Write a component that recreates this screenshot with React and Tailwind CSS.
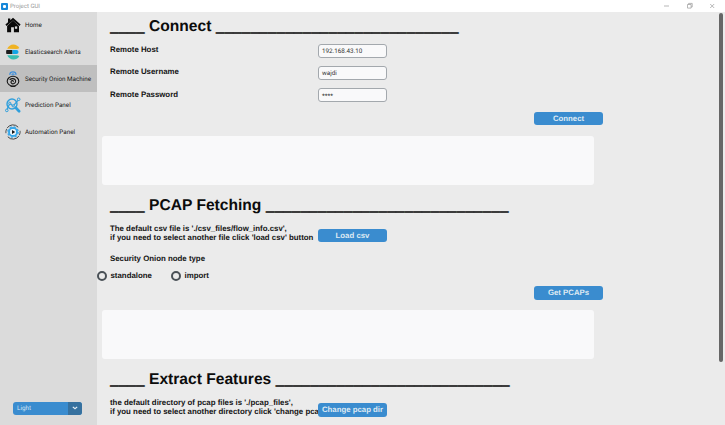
const SANS = "font-['Liberation_Sans',Arial,sans-serif] [text-rendering:geometricPrecision]";
const ROBOTO = "font-[Roboto,sans-serif] [text-rendering:geometricPrecision]";

function HomeIcon() {
  return (
    <svg viewBox="0 0 16 16" className="size-4 shrink-0">
      <path d="M8 .8 15.6 7.6 14.4 9 8 3.4 1.6 9 .4 7.6 3 5.3V1.6h2.3v1.6z" fill="#0a0a0a" />
      <path d="M8 3.6 14 9v6.3H8.9v-5H6.1v5H2.1V9z" fill="#0a0a0a" />
      <path d="M9.9 9.4h2.3v2.4H9.9z" fill="#dbdbdb" />
    </svg>
  );
}

function ElasticIcon() {
  return (
    <svg viewBox="0 0 16 16" className="size-4 shrink-0">
      <path d="M2.2 4.8C3.4 2.2 5.6.6 8.4.6c2.4 0 4.6 1.4 5.9 3.4-.7.6-1.7.9-2.8.9z" fill="#f0b323" />
      <path d="M1.4 6.1h6.1v4H1.4a6.6 6.6 0 0 1 0-4z" fill="#1d1d1d" />
      <path d="M7.5 6.1h4a2 2 0 0 1 0 4h-4z" fill="#12a5e6" />
      <path d="M2.2 11.3h9.3c1.1 0 2.1.3 2.8.9a7 7 0 0 1-5.9 3.3c-2.8 0-5-1.6-6.2-4.2z" fill="#3bbeb1" />
    </svg>
  );
}

function OnionIcon() {
  return (
    <svg viewBox="0 0 16 16" className="size-4 shrink-0" fill="none" strokeLinecap="round">
      <path d="M4.8 3.4C5 .2 10.8 0 11 3.4M7 4c0-1.4 2-1.4 2-.2" stroke="#3f8fdc" strokeWidth="1.2" />
      <ellipse cx="8" cy="10.2" rx="5.8" ry="4.9" stroke="#161616" strokeWidth="1.1" />
      <path
        d="M8.2 10.6c.5-1-1.3-1.6-2-.4-.8 1.5.7 2.9 2.3 2.6 2-.4 2.8-2.6 1.6-4.1C8.900 7.300 6.500 7.200 5 8.500"
        stroke="#161616"
        strokeWidth="1.1"
      />
      <path d="M6 15.500h4" stroke="#161616" strokeWidth=".9" />
    </svg>
  );
}

function PredictionIcon() {
  return (
    <svg viewBox="0 0 16 16" className="size-4 shrink-0" fill="none" stroke="#2f9fdc">
      <circle cx="7" cy="7" r="5" strokeWidth="1.4" />
      <path d="m10.8 10.8 3.3 3.4" strokeWidth="2.7" strokeLinecap="round" />
      <path d="M1.5 13.4 4.8 6.4l3.4 2.5 5.6-6.600" strokeWidth="1.2" />
      <g fill="#dbdbdb" strokeWidth="1">
        <circle cx="1.8" cy="13.4" r="1.3" />
        <circle cx="4.8" cy="6.3" r="1.1" />
        <circle cx="8.2" cy="8.9" r="1.1" />
        <circle cx="13.7" cy="2.3" r="1.3" />
      </g>
    </svg>
  );
}

function AutomationIcon() {
  return (
    <svg viewBox="0 0 16 16" className="size-4 shrink-0" fill="none">
      <path d="M2 4.2a7 7 0 0 1 11.2-1M14 11.8a7 7 0 0 1-11.2 1" stroke="#333" strokeWidth=".9" />
      <path d="M.9 9.2A7 7 0 0 1 1.6 5M15.1 6.8a7 7 0 0 1-.7 4.2" stroke="#333" strokeWidth=".8" />
      <circle cx="8" cy="8" r="4" stroke="#35a7ea" strokeWidth="2" />
      <circle cx="8" cy="8" r="5.2" stroke="#35a7ea" strokeWidth="1.2" strokeDasharray="2.1 2" />
      <circle cx="8" cy="8" r="3" fill="#e9f4fa" />
      <path d="M7 6.1 10.2 8 7 9.9z" fill="#161616" />
    </svg>
  );
}

function NavItem({ icon, label, active }) {
  return (
    <div className={`flex h-[26.7px] items-center gap-1 pl-[5px] ${active ? "bg-[#bfbfbf]" : ""}`}>
      {icon}
      <span className={`${ROBOTO} whitespace-nowrap text-[6.3px] leading-none text-[#1c1c1c]`}>{label}</span>
    </div>
  );
}

function Heading({ children, tail }) {
  return (
    <h2 className={`${SANS} flex h-7 items-center whitespace-pre pl-[13px] pt-[2px] text-[15.6px] font-bold leading-none text-[#0c0c0c]`}>
      <span className="[text-shadow:0_1px_0_#0c0c0c]">____</span>
      <span>{` ${children} `}</span>
      <span className="[text-shadow:0_1px_0_#0c0c0c]">{tail}</span>
    </h2>
  );
}

function Button({ children }) {
  return (
    <button
      className={`${SANS} block h-[13.5px] w-[69px] whitespace-nowrap rounded-[3px] bg-[#3a8ccf] text-center text-[7.8px] font-bold leading-[13.5px] text-[#dfeaf3]`}
    >
      {children}
    </button>
  );
}

function Field({ label, value }) {
  return (
    <div className="flex h-[22.4px] items-center pl-[13px]">
      <span className={`${SANS} w-[208px] text-[7.85px] font-bold leading-none text-[#141414]`}>{label}</span>
      <div className={`${ROBOTO} mt-[2px] flex h-[14px] w-[69px] items-center rounded-[3px] border border-[#a3a8ad] bg-[#f9f9fa] pl-[3px] pt-px text-[6.3px] leading-none text-[#333]`}>
        {value}
      </div>
    </div>
  );
}

function Note({ lines, children }) {
  return (
    <div className="flex pl-[13px]">
      <div className={`${SANS} w-[208px] shrink-0 whitespace-nowrap text-[7.85px] font-bold leading-[9.4px] text-[#141414]`}>
        {lines.map((line) => (
          <p key={line}>{line}</p>
        ))}
      </div>
      <div className="pt-[5px]">
        <Button>{children}</Button>
      </div>
    </div>
  );
}

function Radio({ label }) {
  return (
    <div className="flex w-[74px] items-center gap-[3.5px]">
      <span className="size-[10.5px] rounded-full border-2 border-[#4a5157]" />
      <span className={`${SANS} text-[7.85px] font-bold leading-none text-[#141414]`}>{label}</span>
    </div>
  );
}

function OutputBox() {
  return <div className="ml-[4.5px] h-[49px] w-[492.5px] rounded-[3px] bg-[#f9f9fa]" />;
}

export default function App() {
  return (
    <div className="flex h-[425px] w-[725px] flex-col overflow-hidden bg-[#ebebeb]">
      <header className="flex h-3 shrink-0 items-center bg-white pl-px">
        <span className="flex size-[7px] items-center justify-center rounded-[1px] bg-[#1687d9]">
          <span className="size-[3px] rounded-[1px] bg-white" />
        </span>
        <span className={`${ROBOTO} ml-0.5 pt-px text-[6px] leading-none text-[#999]`}>Project GUI</span>
        <svg viewBox="0 0 52 8" className="ml-auto mr-[9px] h-2 w-[52px]" fill="none" stroke="#999" strokeWidth=".7">
          <path d="M0 4h5M23.5 2.5h3.6v3.6h-3.6zM24.6 2.5V1.4h3.6V5h-1.1M46.2 2l4 4M50.2 2l-4 4" />
        </svg>
      </header>

      <div className="flex min-h-0 flex-1">
        <aside className="flex w-[97px] shrink-0 flex-col bg-[#dbdbdb]">
          <NavItem icon={<HomeIcon />} label="Home" />
          <NavItem icon={<ElasticIcon />} label="Elasticsearch Alerts" />
          <NavItem icon={<OnionIcon />} label="Security Onion Machine" active />
          <NavItem icon={<PredictionIcon />} label="Prediction Panel" />
          <NavItem icon={<AutomationIcon />} label="Automation Panel" />
          <div className="mb-[10px] ml-[13px] mt-auto flex h-[13.5px] w-[69px] overflow-hidden rounded-[3px] bg-[#3a8ccf]">
            <span className={`${ROBOTO} flex flex-1 items-center pl-1 text-[6.3px] leading-none text-[#d5e6f4]`}>Light</span>
            <span className="flex w-[14px] items-center justify-center bg-[#36719f]">
              <svg viewBox="0 0 6 4" className="h-1 w-1.5" fill="none" stroke="#e4edf4" strokeWidth="1.2">
                <path d="m.8.9 2.2 1.9L5.2.9" />
              </svg>
            </span>
          </div>
        </aside>

        <main className="min-w-0 flex-1">
          <Heading tail="____________________________">Connect</Heading>
          <div className="-mt-[1.5px]">
            <Field label="Remote Host" value="192.168.43.10" />
            <Field label="Remote Username" value="wajdi" />
            <Field label="Remote Password" value="****" />
          </div>
          <div className="h-[30.3px] pl-[437px] pt-[6.3px]">
            <Button>Connect</Button>
          </div>
          <OutputBox />
          <div className="mt-[6px]">
            <Heading tail="____________________________">PCAP Fetching</Heading>
          </div>
          <div className="mt-[5px]">
            <Note
              lines={[
                "The default csv file is './csv_files/flow_info.csv',",
                "if you need to select another file click 'load csv' button",
              ]}
            >
              Load csv
            </Note>
          </div>
          <p className={`${SANS} mt-[11px] pl-[13px] text-[7.85px] font-bold leading-[9.4px] text-[#141414]`}>
            Security Onion node type
          </p>
          <div className="-ml-[0.5px] mt-[7.4px] flex h-[10.5px]">
            <Radio label="standalone" />
            <Radio label="import" />
          </div>
          <div className="mt-[5px] pl-[437px]">
            <Button>Get PCAPs</Button>
          </div>
          <div className="mt-[10.5px]">
            <OutputBox />
          </div>
          <div className="mt-[6px]">
            <Heading tail="___________________________">Extract Features</Heading>
          </div>
          <div className="mt-[5px]">
            <Note
              lines={[
                "the default directory of pcap files is './pcap_files',",
                "if you need to select another directory click 'change pca",
              ]}
            >
              Change pcap dir
            </Note>
          </div>
        </main>

        <div className="mr-[2px] mt-[1px] h-[349px] w-1 shrink-0 rounded-full bg-[#666]" />
      </div>
    </div>
  );
}
